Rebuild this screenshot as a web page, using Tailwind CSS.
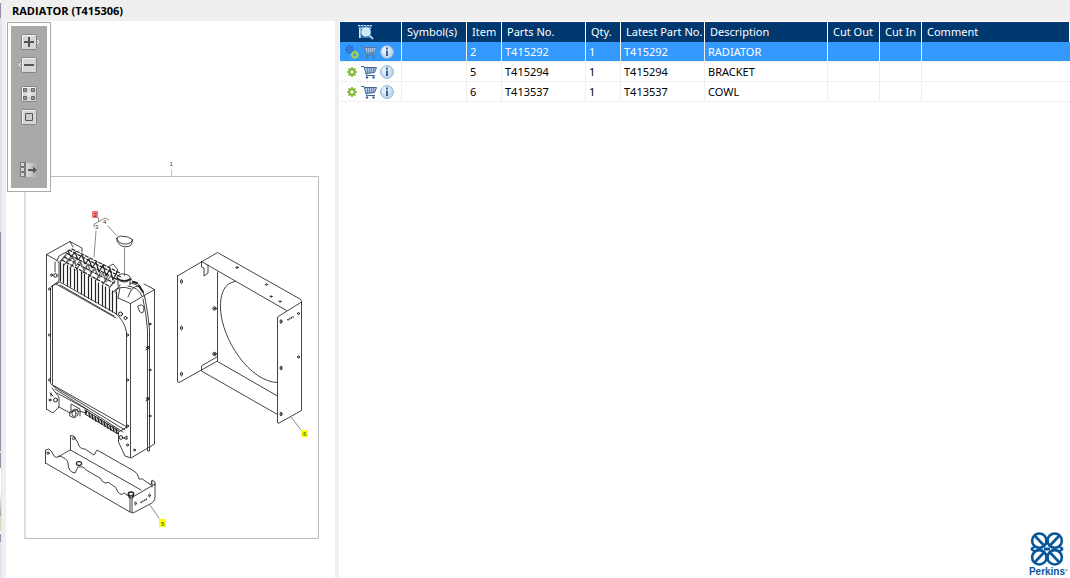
<!DOCTYPE html>
<html lang="en">
<head>
<meta charset="utf-8">
<title>RADIATOR (T415306)</title>
<script src="https://cdn.jsdelivr.net/npm/@tailwindcss/browser@4"></script>
</head>
<body class="flex min-h-screen bg-[#efefef] font-['Noto_Sans','Open_Sans',sans-serif] text-[11px] leading-4 text-black">

<!-- Edge of the neighbouring pane -->
<div class="flex w-[2px] shrink-0 flex-col border-r border-[#e6e4f2]">
  <div class="h-[3px] bg-white"></div>
  <div class="h-[15px] bg-[#9592a8]"></div>
  <div class="h-[214px] bg-[#e2e0f0]"></div>
  <div class="h-[219px] bg-[#9592a8]"></div>
  <div class="h-[2px] bg-[#dddddd]"></div>
  <div class="h-[15px] bg-[#9592a8]"></div>
  <div class="h-[24px] bg-white"></div>
  <div class="h-[24px] bg-linear-to-b from-white to-[#a0a0a0]"></div>
  <div class="h-[15px] bg-[#dad8b8]"></div>
  <div class="h-[3px] bg-white"></div>
  <div class="h-[8px] bg-[#9592a8]"></div>
  <div class="grow bg-[#e2e0f0]"></div>
</div>

<div class="flex min-w-0 grow flex-col pl-1">
  <h1 class="h-[21px] pt-[3px] pl-[6px] font-['Open_Sans','Noto_Sans',sans-serif] text-[11px] font-bold">RADIATOR (T415306)</h1>

  <div class="flex min-h-0 grow">
    <!-- Drawing pane -->
    <section class="relative w-[329px] shrink-0 bg-white" aria-label="Parts drawing">
      <svg class="block w-full" viewBox="6 21 329 557" fill="none" stroke="#222" stroke-width=".85" stroke-linejoin="round" stroke-linecap="round" font-family="Liberation Sans, sans-serif">
        <path d="M25 177V539" stroke="#dedede" stroke-width="2" stroke-linecap="butt"/>
        <path d="M25 176.500H318.500V538.500H25M171.500 170V176" stroke="#bcbcbc" stroke-width="1"/>
        <text x="169.500" y="166" font-size="6" fill="#333" stroke="none">1</text>

        <!-- Callout 2, 3 and 4 -->
        <rect x="92" y="211" width="6" height="7" fill="#f47c7c" stroke="none"/>
        <text x="93.500" y="217" font-size="6" fill="#522" stroke="none">2</text>
        <path d="M98.500 218V221M94 227V224L98 222L105 218L109 220M108 226L117 236M96 231L94 257M124.500 248V276" stroke="#777"/>
        <g font-size="6" fill="#333" stroke="none"><text x="95" y="229">3</text><text x="103" y="224">4</text></g>
        <path d="M117 238L120 236L128 237L133 240L130 243Q123 246 118 241Z"/>
        <path d="M117 238V241Q121 249 130 246L132 243V240"/>

        <!-- Radiator: left plate -->
        <path d="M46.500 409V254.500L70 241.500L82 248V252M46.500 254.500L57 260.500L59 263V281L52 286Q50.500 287 50.500 290V383M52.500 286V384M57 260.500L59 256L70 250M46.500 409L53 413L59 407V397L52 388M70 241.500L73 247M55 262V272"/>
        <!-- Radiator: front frame -->
        <path d="M52 286L60 282L115 313Q124 320 126.500 332V428M60 285L114 316M56 284L116 318M51 384L127 427M53 386L125 430M55 389L123 432M57 393L88 410M59 407L70 413L78 409"/>
        <!-- Radiator: right plate -->
        <path d="M118 298L130.500 303.500L154.500 289.500V444L131 458L125 456L118.500 442V432L127 427M118 298L120 288M130.500 303.500V457M154.500 289.500L144 284M143 299Q146 312 147.500 330V451H149.500V330Q148 312 145 298M138 306Q143 303 144 308Q144 315 140 312ZM130 283Q142 284 145 298M128 286Q138 287 142 296"/>
        <!-- Radiator: fins -->
        <g stroke-width="1.200">
          <path d="M60.500 261V281M63.500 264V283M67.500 265V286M70.500 267V287M74.500 269V289M77.500 270V291M81.500 272V294M84.500 274V296M88.500 276V298M91.500 278V300M95.500 280V302M98.500 283V303M102.500 285V306M105.500 287V308M109.500 289V310M112.500 291V312M116.500 292V314"/>
          <path d="M60 262L66 255M64 265L70 258M70 268L76 260M76 270L81 263M83 273L87 266M89 277L94 269M96 280L101 272M103 284L108 276M109 288L115 281M115 292L120 285" stroke="#555"/>
          <path d="M69 250L121 277M66 253L118 280M64 257L114 283M62 260L109 286M72 249L120 273" stroke-dasharray="3 2"/>
          <path d="M68 251L71 257L75 252L78 260L82 255L85 264L89 259L92 268L96 262L99 272L103 265L106 276L110 269L113 280L117 272"/>
          <path d="M65 256L69 261L73 257L76 266L80 261L84 270L88 264L91 274L95 269L99 278L103 273L106 282L110 277" stroke="#666"/>
        </g>
        <path d="M108 267L113 264L118 270L116 274"/>
        <!-- Filler neck and tank -->
        <path d="M117 278Q118 273 124 274Q131 275 130 279Q127 284 120 281ZM118 280V286M130 280V285M112 293Q119 284 131 289M132 281Q140 282 142 291M128 297Q132 285 139 286"/>
        <path d="M117 278Q123 283 131 279" stroke-width="1.600"/>
        <path d="M133 282L137 283M139 286L143 292" stroke-width="2" stroke-dasharray="2 1"/>
        <!-- Outlet and lower fins -->
        <path d="M71 411V404L80 409V416M70 412L75 409L78 411V415L74 418L70 416ZM78 411L87 413L85 410"/>
        <ellipse cx="74" cy="413.500" rx="2" ry="3"/>
        <path d="M85 410L119 431M85 414L118 434" stroke-width="1"/>
        <path d="M86 411V414M89 413L90 417M92 415L93 419M95 417L96 421M98 418L99 422M101 420L102 424M104 422L105 426M107 424L108 428M110 426L111 430M113 427L114 431M116 429L117 433" stroke-width="1.500"/>
        <!-- Radiator: fasteners -->
        <g stroke-width="1">
          <circle cx="55.500" cy="275.500" r="1.800"/><circle cx="51.500" cy="275" r="1"/><circle cx="49.500" cy="289" r="1"/>
          <circle cx="49.500" cy="335" r="1"/><circle cx="49.500" cy="380" r="1"/><path d="M50 393L53 396M51 396V393"/><circle cx="50" cy="400" r="1"/><circle cx="55.500" cy="400" r="2"/>
          <circle cx="120.500" cy="314" r="2"/><circle cx="125.500" cy="318" r="1.500"/><circle cx="127.500" cy="335" r="1"/><circle cx="127.500" cy="380" r="1"/><circle cx="127.500" cy="426" r="1"/>
          <circle cx="121" cy="437.500" r="1.800"/><path d="M124 438L127 436V439Z"/><circle cx="127.500" cy="445" r="1"/><circle cx="134.500" cy="450" r=".9"/>
          <circle cx="150" cy="324" r=".9"/><circle cx="150" cy="370" r=".9"/><circle cx="150" cy="416" r=".9"/>
          <path d="M146 347L149 349V346L146 350M146 398L149 400V397L146 401"/>
        </g>

        <!-- Bracket -->
        <path d="M45.500 463V450L49 449L52 452L54 456Q56 459 59 456Q67 458 68 463Q68 472 75 473L78 467Q84 466 86 470L100 478Q102 482 105 483Q109 481 112 485Q116 486 118 492Q121 496 124 493L130 497V512L45.500 463ZM130 512Q133 514 135 512L150 504Q155 502 155 497V484L132 497.500V512M70.500 450V435.500L74 436L78 443Q79 449 85 449L94 455L97 450L134 471Q138 473 139 479Q143 478 145 481L151 485L152 480L155 482V485M70.500 450L141 490M70 450L58 457"/>
        <g><circle cx="48" cy="453" r="1.200"/><circle cx="73.500" cy="438.500" r="1.200"/><ellipse cx="79" cy="463.500" rx="2.600" ry="1.900" stroke-width="1.200"/><ellipse cx="131" cy="494" rx="2.800" ry="2" stroke-width="1.300"/><path d="M129 494V498H133V494M152 482V487"/><ellipse cx="135.500" cy="503.500" rx=".8" ry="1.500"/><ellipse cx="149.500" cy="495.500" rx=".8" ry="1.500"/><path d="M140.500 502.500L147 499" stroke-width="1.600" stroke-linecap="butt" stroke-dasharray="1.300 .800"/></g>
        <path d="M150 505L159 518" stroke="#777"/>
        <rect x="159" y="519" width="7" height="8" fill="#ff0" stroke="none"/>
        <text x="161" y="526" font-size="6" fill="#333" stroke="none">5</text>

        <!-- Cowl -->
        <path d="M177.500 276L217.500 252.500L300 299Q301.500 300 301.500 302V410.500L279 423Q277.500 424 277.500 422V317L301.500 302M177.500 276V381Q177.500 383.500 180 382L217.500 361V272M201.500 261.500L286.500 310.500M201.500 261.500V267L204 268V276L208 273V265M217.500 356.500L201.500 366V371L277.500 414.500M217.500 361.500L277.500 396M235 281.500C224 283 220 294 220.500 309C222 340 250 382 277.500 382.500"/>
        <g stroke-width="1">
          <ellipse cx="181.500" cy="281.500" rx=".9" ry="2"/><ellipse cx="181.500" cy="328" rx=".9" ry="2"/><ellipse cx="181.500" cy="374" rx=".9" ry="2"/>
          <ellipse cx="281" cy="321.500" rx=".9" ry="2"/><ellipse cx="281" cy="368" rx=".9" ry="2"/><ellipse cx="281" cy="414" rx=".9" ry="2"/>
          <circle cx="214.500" cy="308.500" r="1.700"/><circle cx="214.500" cy="308.500" r=".5"/><circle cx="214.500" cy="354" r="1.700"/><circle cx="214.500" cy="354" r=".5"/><circle cx="298.500" cy="313.500" r="1"/><circle cx="298.500" cy="357" r="1"/>
          <ellipse cx="237" cy="267.500" rx="1.200" ry=".7"/><ellipse cx="266.500" cy="284.500" rx="1.200" ry=".7"/><ellipse cx="271" cy="296.500" rx="1" ry=".6"/><ellipse cx="280" cy="301.500" rx="1" ry=".6"/>
          <path d="M287.500 320L293.500 316.500" stroke-width="1.600" stroke-linecap="butt" stroke-dasharray="1.300 .700"/>
        </g>
        <path d="M291 417L301 430" stroke="#777"/>
        <rect x="301" y="430" width="7" height="7" fill="#ff0" stroke="none"/>
        <text x="303" y="436" font-size="6" fill="#333" stroke="none">6</text>
      </svg>

      <!-- Floating zoom toolbar -->
      <div class="absolute top-px left-px border border-[#a9a9a9] bg-white p-[3px]">
        <div class="flex h-[162px] w-9 flex-col items-center bg-[#a9a9a9] pt-2" role="toolbar" aria-label="Drawing tools">
          <button aria-label="Zoom in" class="size-4"><svg class="size-4 overflow-visible" viewBox="0 0 16 16"><rect x=".5" y=".5" width="15" height="15" rx="1" fill="#d6d6d6" stroke="#858585"/><path d="M1.500 14V1.500H14M16 6L18 8L16 10" fill="none" stroke="#f4f4f4"/><path d="M8 3V13M3 8H13" stroke="#555" stroke-width="2"/></svg></button>
          <button aria-label="Zoom out" class="mt-[7px] size-4"><svg class="size-4 overflow-visible" viewBox="0 0 16 16"><rect x=".5" y=".5" width="15" height="15" rx="1" fill="#d6d6d6" stroke="#858585"/><path d="M1.500 14V1.500H14M0 6L-2 8L0 10" fill="none" stroke="#f4f4f4"/><path d="M3 8H13" stroke="#555" stroke-width="2"/></svg></button>
          <button aria-label="Fit to window" class="mt-[13px] size-4"><svg class="size-4" viewBox="0 0 16 16"><rect x=".5" y=".5" width="15" height="15" rx="1" fill="#d6d6d6" stroke="#858585"/><path d="M1.500 14V1.500H14M8 5V11M5 8H11" fill="none" stroke="#f4f4f4"/><path d="M2.500 2.500h3v3h-3zM10.500 2.500h3v3h-3zM2.500 10.500h3v3h-3zM10.500 10.500h3v3h-3z" fill="#999" stroke="#666"/></svg></button>
          <button aria-label="Actual size" class="mt-[7px] size-4"><svg class="size-4" viewBox="0 0 16 16"><rect x=".5" y=".5" width="15" height="15" rx="1" fill="#d6d6d6" stroke="#858585"/><path d="M1.500 14V1.500H14" fill="none" stroke="#f4f4f4"/><path d="M4.500 4.500h7v7h-7z" fill="#ccc" stroke="#555"/></svg></button>
          <button aria-label="Hide list" class="mt-[37px] size-4"><svg class="size-4 overflow-visible" viewBox="0 0 16 16"><defs><linearGradient id="fade"><stop stop-color="#dedede"/><stop offset="1" stop-color="#a9a9a9"/></linearGradient></defs><path d="M5 1H16V15H5z" fill="url(#fade)"/><path d="M-.5 .5h4v4h-4zM-.5 5.500h4v4h-4zM-.5 10.500h4v4h-4z" fill="#d6d6d6" stroke="#777"/><path d="M4.500 0V16" stroke="#777"/><path d="M7 8H13" stroke="#555" stroke-width="2"/><path d="M12 4.500L16 8L12 11.500z" fill="#555"/></svg></button>
        </div>
      </div>
    </section>

    <!-- Parts list pane -->
    <section class="ml-1 flex min-w-0 grow flex-col bg-white pt-px pl-px" aria-label="Parts list">
      <svg width="0" height="0" class="absolute" aria-hidden="true">
        <defs>
          <symbol id="gear" viewBox="0 0 12 12"><circle cx="6" cy="6" r="3.200" fill="none" stroke="#7fb52e" stroke-width="2.400"/><path d="M6 0V2.500M6 9.500V12M0 6H2.500M9.500 6H12M1.800 1.800L3.500 3.500M8.500 8.500L10.200 10.200M10.200 1.800L8.500 3.500M3.500 8.500L1.800 10.200" stroke="#7fb52e" stroke-width="2"/></symbol>
          <symbol id="cart" viewBox="0 0 16 14"><path d="M4 2.500H15.500L13.500 7.500L5 8.500z" fill="#a9c4e4"/><path d="M0 1.500H3L5.500 10.500H14M3.500 2.500H15.500L13.500 7.500L5 8.500" fill="none" stroke="currentColor"/><path d="M6.500 3V8M8.500 3V8M10.500 3V8M12.500 3V7.500" stroke="currentColor" stroke-width=".6"/><circle cx="6" cy="12.500" r="1.200" fill="currentColor"/><circle cx="12.500" cy="12.500" r="1.200" fill="currentColor"/></symbol>
          <symbol id="info" viewBox="0 0 14 14"><circle cx="7" cy="7" r="6.400" fill="#c5dcf0" stroke="#8fb2d4"/><circle cx="6" cy="5.500" r="4" fill="#e2eef9"/><path d="M6 2.500h2v2H6zM6 5.500h2v5.500H6z" fill="#33629c"/></symbol>
        </defs>
      </svg>
      <table class="w-full table-fixed border-separate border-spacing-0 text-left">
        <colgroup>
          <col class="w-[62px]"><col class="w-[65px]"><col class="w-[35px]"><col class="w-[84px]"><col class="w-[35px]"><col class="w-[84px]"><col class="w-[123px]"><col class="w-[52px]"><col class="w-[42px]"><col>
        </colgroup>
        <thead>
          <tr class="h-5 bg-[#003870] whitespace-nowrap text-white *:border-r *:border-white *:p-0 *:pl-[5px] *:font-normal">
            <th><button aria-label="Search parts" class="ml-[13px] block size-4"><svg class="size-4" viewBox="0 0 16 16"><path d="M1 1H13V14H1z" fill="#8ebbe0"/><path d="M0 1H14V3.500H0z" fill="#2f76b8"/><path d="M0 1.500H14" stroke="#d9ebf8" stroke-dasharray="2 1"/><path d="M1.500 4V14" stroke="#d9ebf8"/><path d="M3 5H13V14H3z" fill="#2f76b8"/><circle cx="8" cy="8" r="4" fill="#c8e8f5" stroke="#f2f8fc" stroke-width="1.200"/><path d="M11 11L15 15" stroke="#a9c9e8" stroke-width="2"/></svg></button></th>
            <th>Symbol(s)</th><th>Item</th><th>Parts No.</th><th>Qty.</th><th>Latest Part No.</th><th>Description</th><th>Cut Out</th><th>Cut In</th><th class="border-r-0">Comment</th>
          </tr>
        </thead>
        <tbody class="[&_td]:border-r [&_td]:border-b [&_td]:border-[#efefef] [&_td]:p-0 [&_td]:pl-[3px] [&_td:last-child]:border-r-0">
          <tr class="h-5 bg-[#3399ff] text-white">
            <td><div class="flex h-4 items-center"><button aria-label="Open assembly" class="ml-[2px] size-[14px]"><svg class="size-[14px]" viewBox="0 0 14 14"><path d="M4.500 0V9M0 4.500H9M1.300 1.300L7.700 7.700M7.700 1.300L1.300 7.700" stroke="#245fc4" stroke-width="1.500"/><circle cx="4.500" cy="4.500" r="2.800" fill="#3a78d8"/><circle cx="9.800" cy="9.800" r="2.600" fill="#3399ff" stroke="#a3cf52" stroke-width="2"/><path d="M9.800 5.600V7M9.800 12.600V14M5.600 9.800H7M12.600 9.800H14M6.900 6.900L8 8M11.600 11.600L12.700 12.700M12.700 6.900L11.600 8M8 11.600L6.900 12.700" stroke="#a3cf52" stroke-width="1.400"/></svg></button><button aria-label="Add to cart" class="ml-[2px] h-[14px] w-4 text-[#5d7896]"><svg class="h-[14px] w-4"><use href="#cart"/></svg></button><button aria-label="Information" class="ml-[3px] size-[14px]"><svg class="size-[14px]"><use href="#info"/></svg></button></div></td>
            <td></td><td>2</td><td>T415292</td><td>1</td><td>T415292</td><td>RADIATOR</td><td></td><td></td><td></td>
          </tr>
          <tr class="h-5">
            <td><div class="flex h-4 items-center"><button aria-label="Open part" class="ml-[2px] flex size-[14px] items-center justify-center"><svg class="size-[10px]"><use href="#gear"/></svg></button><button aria-label="Add to cart" class="ml-[2px] h-[14px] w-4 text-[#3d6698]"><svg class="h-[14px] w-4"><use href="#cart"/></svg></button><button aria-label="Information" class="ml-[3px] size-[14px]"><svg class="size-[14px]"><use href="#info"/></svg></button></div></td>
            <td></td><td>5</td><td>T415294</td><td>1</td><td>T415294</td><td>BRACKET</td><td></td><td></td><td></td>
          </tr>
          <tr class="h-5">
            <td><div class="flex h-4 items-center"><button aria-label="Open part" class="ml-[2px] flex size-[14px] items-center justify-center"><svg class="size-[10px]"><use href="#gear"/></svg></button><button aria-label="Add to cart" class="ml-[2px] h-[14px] w-4 text-[#3d6698]"><svg class="h-[14px] w-4"><use href="#cart"/></svg></button><button aria-label="Information" class="ml-[3px] size-[14px]"><svg class="size-[14px]"><use href="#info"/></svg></button></div></td>
            <td></td><td>6</td><td>T413537</td><td>1</td><td>T413537</td><td>COWL</td><td></td><td></td><td></td>
          </tr>
        </tbody>
      </table>

      <div class="mt-auto mr-[2px] flex flex-col items-end text-[#07579b]">
        <svg class="mr-1 h-[34px] w-[34px]" viewBox="0 0 34 34" fill="none" stroke="currentColor" stroke-width="2.600" aria-hidden="true"><circle cx="9.300" cy="8.700" r="7.200"/><circle cx="24.700" cy="8.700" r="7.200"/><circle cx="9.300" cy="25.300" r="7.200"/><circle cx="24.700" cy="25.300" r="7.200"/><path d="M5 4L14 13.500M29 4L20 13.500M5 30L14 20.500M29 30L20 20.500"/><path d="M1 17L5 14.500M1 17L5 19.500M33 17L29 14.500M33 17L29 19.500M15 9H19M15 25H19M14 16.500H20M14 17.500H20" stroke-width="2.200"/></svg>
        <div class="flex font-['Liberation_Sans',sans-serif] text-[10px] leading-3 font-bold">Perkins<span class="text-[4px] leading-[10px]">®</span></div>
      </div>
    </section>
  </div>
</div>
</body>
</html>
